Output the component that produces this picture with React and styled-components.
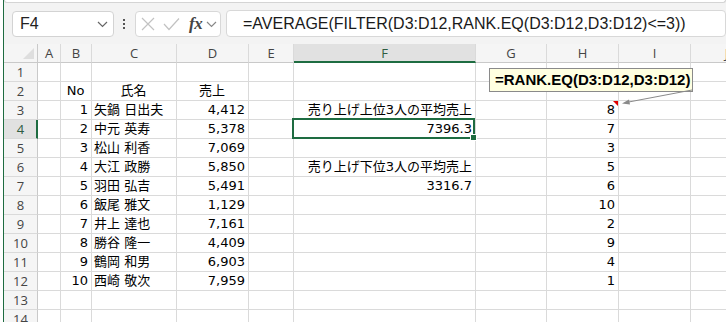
import React from "react";
import styled, { createGlobalStyle } from "styled-components";

const GlobalStyle = createGlobalStyle`
  html, body { margin: 0; padding: 0; background: #ffffff; }
  body { font-family: "Liberation Sans", "Noto Sans CJK JP", sans-serif; }
`;

const GREEN = "#1e6c41";
const GRID = "#dadada";
const HEAD_LINE = "#c9c9c9";

const Window = styled.div`
  width: 722px;
  height: 322px;
  margin-left: 3px;
  border-left: 1px solid ${GREEN};
  background: #f3f3f3;
  overflow: hidden;
  display: flex;
  flex-direction: column;
`;

const TopPanel = styled.div`
  flex: none;
  height: 2px;
  background: #ffffff;
  border-bottom: 1px solid #d4d4d4;
  border-right: 1px solid #d4d4d4;
  border-left: 1px solid #d4d4d4;
  border-bottom-left-radius: 4px;
  border-bottom-right-radius: 4px;
`;

const Toolbar = styled.div`
  flex: none;
  height: 41px;
  box-sizing: border-box;
  padding: 7px 0 0 8px;
  display: flex;
  align-items: flex-start;
`;

const NameBox = styled.div`
  box-sizing: border-box;
  width: 102px;
  height: 26px;
  margin-top: 1px;
  background: #ffffff;
  border: 1px solid #d3d3d3;
  border-radius: 4px;
  display: flex;
  align-items: center;
  justify-content: space-between;
  padding: 0 5px 0 7px;
  font: 16px "Liberation Sans", sans-serif;
  color: #222;
`;

const Dots = styled.div`
  width: 4px;
  margin: 9px 9px 0 8px;
  display: flex;
  flex-direction: column;
  align-items: center;
  gap: 2px;
  span {
    width: 2px;
    height: 2px;
    background: #555;
  }
`;

const FxGroup = styled.div`
  box-sizing: border-box;
  width: 86px;
  height: 26px;
  margin-top: 1px;
  background: #ffffff;
  border: 1px solid #d8d8d8;
  border-radius: 4px;
  display: flex;
  align-items: center;
  padding: 0 0 0 5px;
  gap: 8px;
`;

const FxLabel = styled.span`
  font: italic bold 17px "Liberation Serif", serif;
  color: #444;
  margin-left: 1px;
  margin-right: -4px;
  letter-spacing: -0.5px;
`;

const FormulaBox = styled.div`
  flex: 1;
  box-sizing: border-box;
  height: 27px;
  margin-left: 5px;
  background: #ffffff;
  border: 1px solid #d8d8d8;
  border-radius: 4px;
  display: flex;
  align-items: center;
  padding-left: 16px;
  font: 16px "Liberation Sans", sans-serif;
  color: #1a1a1a;
  white-space: nowrap;
  overflow: hidden;
`;

const Sheet = styled.div`
  position: relative;
  flex: 1;
  background: #ffffff;
`;

const Row = styled.div`
  display: flex;
  height: 19px;
`;

const Corner = styled.div`
  box-sizing: border-box;
  flex: none;
  width: 34px;
  height: 19px;
  background: #f5f5f5;
  border-right: 1px solid ${HEAD_LINE};
  border-bottom: 1px solid ${HEAD_LINE};
  position: relative;
  &::after {
    content: "";
    position: absolute;
    right: 3px;
    bottom: 3px;
    width: 0;
    height: 0;
    border-left: 11px solid transparent;
    border-bottom: 11px solid #dedede;
  }
`;

const ColHead = styled.div`
  box-sizing: border-box;
  flex: none;
  width: ${(p) => p.$w}px;
  height: 19px;
  background: ${(p) => (p.$sel ? "#e1e1e1" : "#f5f5f5")};
  border-right: 1px solid ${GRID};
  border-bottom: ${(p) => (p.$sel ? `2px solid ${GREEN}` : `1px solid ${HEAD_LINE}`)};
  text-align: center;
  font: 13px "Open Sans", sans-serif;
  line-height: 18px;
  color: ${(p) => (p.$sel ? "#2f5c41" : "#444")};
`;

const RowHead = styled.div`
  box-sizing: border-box;
  flex: none;
  width: 34px;
  height: 19px;
  background: ${(p) => (p.$sel ? "#e1e1e1" : "#f5f5f5")};
  border-right: ${(p) => (p.$sel ? `2px solid ${GREEN}` : `1px solid ${HEAD_LINE}`)};
  border-bottom: 1px solid ${GRID};
  text-align: center;
  padding-left: ${(p) => (p.$sel ? "1px" : "0")};
  font: 13px "Open Sans", sans-serif;
  line-height: 18px;
  color: ${(p) => (p.$sel ? "#2f5c41" : "#444")};
`;

const Cell = styled.div`
  box-sizing: border-box;
  flex: none;
  position: relative;
  width: ${(p) => p.$w}px;
  height: 19px;
  border-right: 1px solid ${GRID};
  border-bottom: 1px solid ${GRID};
  padding: 0 3px 0 2px;
  text-align: ${(p) => p.$align || "left"};
  font: 13px "DejaVu Sans", "Noto Sans CJK JP", sans-serif;
  line-height: 18px;
  white-space: nowrap;
  color: #000;
`;

const Selection = styled.div`
  position: absolute;
  top: -2px;
  left: -2px;
  right: 0;
  bottom: -1px;
  border: 2px solid ${GREEN};
  z-index: 3;
  pointer-events: none;
  &::after {
    content: "";
    position: absolute;
    right: -4px;
    bottom: -4px;
    width: 5px;
    height: 5px;
    background: ${GREEN};
    border: 1px solid #ffffff;
  }
`;

const CommentMark = styled.div`
  position: absolute;
  top: 0;
  right: 0;
  width: 0;
  height: 0;
  border-left: 5px solid transparent;
  border-top: 5px solid #e00000;
`;

const Callout = styled.div`
  position: absolute;
  left: 485px;
  top: 24px;
  box-sizing: border-box;
  width: 204px;
  height: 24px;
  background: #ffffe1;
  border: 1px solid #8a8a8a;
  padding-left: 5px;
  font: bold 15px "Liberation Sans", sans-serif;
  line-height: 22px;
  color: #000;
  white-space: nowrap;
  z-index: 4;
`;

const ArrowSvg = styled.svg`
  position: absolute;
  left: 600px;
  top: 40px;
  z-index: 4;
  overflow: visible;
`;

const Chevron = ({ color = "#555" }) => (
  <svg width="11" height="7" viewBox="0 0 11 7">
    <path d="M1 1 L5.5 5.5 L10 1" fill="none" stroke={color} strokeWidth="1.2" />
  </svg>
);

const COLS = [
  ["A", 23],
  ["B", 31],
  ["C", 85],
  ["D", 72],
  ["E", 45],
  ["F", 182],
  ["G", 71],
  ["H", 72],
  ["I", 72],
  ["J", 72],
];

const people = [
  [1, "矢鍋 日出夫", "4,412", 8],
  [2, "中元 英寿", "5,378", 7],
  [3, "松山 利香", "7,069", 3],
  [4, "大江 政勝", "5,850", 5],
  [5, "羽田 弘吉", "5,491", 6],
  [6, "飯尾 雅文", "1,129", 10],
  [7, "井上 達也", "7,161", 2],
  [8, "勝谷 隆一", "4,409", 9],
  [9, "鶴岡 和男", "6,903", 4],
  [10, "西崎 敬次", "7,959", 1],
];

const extraF = {
  3: "売り上げ上位3人の平均売上",
  4: "7396.3",
  6: "売り上げ下位3人の平均売上",
  7: "3316.7",
};

function buildRow(r) {
  const cells = {};
  if (r === 2) {
    cells.B = { text: "No", align: "center" };
    cells.C = { text: "氏名", align: "center" };
    cells.D = { text: "売上", align: "center" };
  }
  if (r >= 3 && r <= 12) {
    const p = people[r - 3];
    cells.B = { text: String(p[0]), align: "right" };
    cells.C = { text: p[1], align: "left" };
    cells.D = { text: p[2], align: "right" };
    cells.H = { text: String(p[3]), align: "right" };
  }
  if (extraF[r]) cells.F = { text: extraF[r], align: "right" };
  return cells;
}

export default function App() {
  const rows = Array.from({ length: 14 }, (_, i) => i + 1);
  return (
    <>
      <GlobalStyle />
      <Window>
        <TopPanel />
        <Toolbar>
          <NameBox>
            <span>F4</span>
            <Chevron color="#666" />
          </NameBox>
          <Dots>
            <span />
            <span />
            <span />
          </Dots>
          <FxGroup>
            <svg width="14" height="14" viewBox="0 0 14 14">
              <path d="M1 1 L13 13 M13 1 L1 13" fill="none" stroke="#c2c2c2" strokeWidth="1.2" />
            </svg>
            <svg width="17" height="14" viewBox="0 0 17 14">
              <path d="M1 7 L6 12.5 L16 1.5" fill="none" stroke="#c2c2c2" strokeWidth="1.2" />
            </svg>
            <FxLabel>fx</FxLabel>
            <Chevron color="#888" />
          </FxGroup>
          <FormulaBox>=AVERAGE(FILTER(D3:D12,RANK.EQ(D3:D12,D3:D12)&lt;=3))</FormulaBox>
        </Toolbar>
        <Sheet>
          <Row>
            <Corner />
            {COLS.map(([l, w]) => (
              <ColHead key={l} $w={w} $sel={l === "F"}>
                {l}
              </ColHead>
            ))}
          </Row>
          {rows.map((r) => {
            const cells = buildRow(r);
            return (
              <Row key={r}>
                <RowHead $sel={r === 4}>{r}</RowHead>
                {COLS.map(([l, w]) => {
                  const c = cells[l];
                  return (
                    <Cell key={l} $w={w} $align={c ? c.align : "left"}>
                      {c ? c.text : ""}
                      {l === "F" && r === 4 && <Selection />}
                      {l === "H" && r === 3 && <CommentMark />}
                    </Cell>
                  );
                })}
              </Row>
            );
          })}
          <Callout>=RANK.EQ(D3:D12,D3:D12)</Callout>
          <ArrowSvg width="100" height="30" viewBox="0 0 100 30">
            <line x1="88" y1="6" x2="22" y2="18.5" stroke="#8a8a8a" strokeWidth="1" />
            <polygon points="18,19.5 25,15.5 26,20.5" fill="#8a8a8a" />
          </ArrowSvg>
        </Sheet>
      </Window>
    </>
  );
}
